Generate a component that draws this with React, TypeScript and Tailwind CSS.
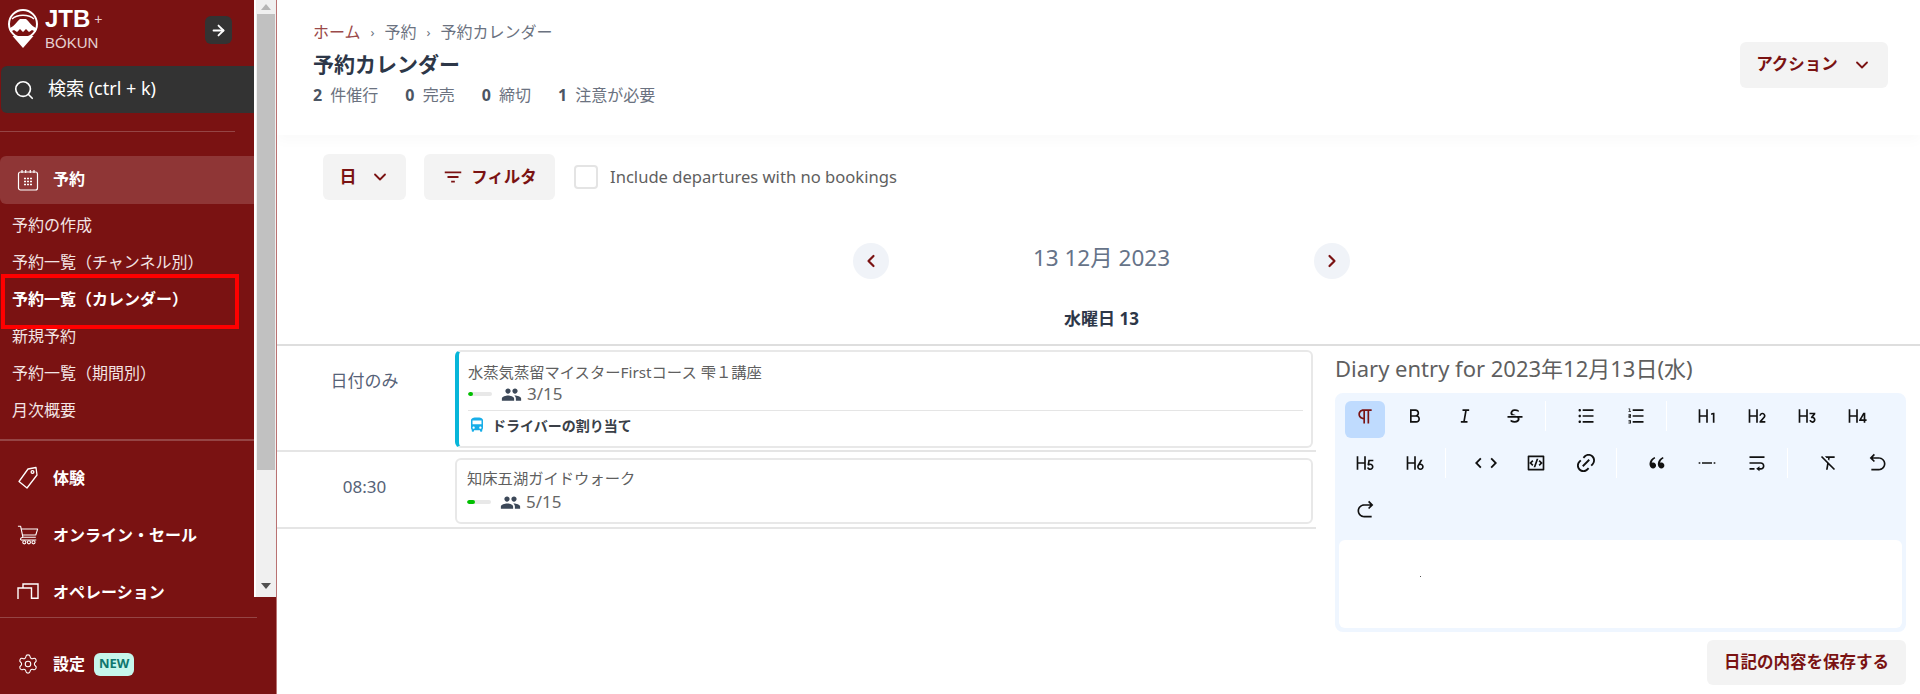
import React from "react";
import { ArrowRight, ChevronDown, ChevronLeft, ChevronRight, Search, Settings } from "lucide-react";
import { MdPeople, MdDirectionsBus, MdFilterList } from "react-icons/md";
import {
  RiParagraph, RiBold, RiItalic, RiStrikethrough, RiListUnordered, RiListOrdered, RiH1, RiH2, RiH3, RiH4, RiH5, RiH6,
  RiCodeSLine, RiCodeBoxLine, RiLink, RiDoubleQuotesL, RiSeparator, RiTextWrap, RiFormatClear, RiArrowGoBackLine, RiArrowGoForwardLine,
} from "react-icons/ri";

function Logo() {
  return (
    <svg width="32" height="40" viewBox="0 0 32 40" className="shrink-0">
      <path d="M16 39 L4 25 A15 15 0 1 1 28 25 Z" fill="#7a1212" />
      <path d="M16 39 L5.5 27 H26.5 Z" fill="#fff" />
      <circle cx="16" cy="15" r="14" fill="none" stroke="#fff" strokeWidth="2" />
      <path d="M3 19 C8 17 10 12 13 10 H19 C22 12 24 17 29 19 L29 23 L25 21 L22 23 L19 20 L16 23 L13 20 L10 23 L7 21 L3 23 Z" fill="#fff" />
      <path d="M5 10 C10 5 22 5 27 10" fill="none" stroke="#fff" strokeWidth="1.5" />
    </svg>
  );
}

function CalendarIcon() {
  return (
    <svg width="22" height="22" viewBox="0 0 22 22" fill="none" stroke="#fff" strokeWidth="1.2">
      <rect x="1.5" y="3" width="19" height="18" rx="2" />
      <path d="M5 1v3M8.7 1v3M13.3 1v3M17 1v3" />
      <path d="M7 9.5h8M7 12.5h8M7 15.5h8" strokeDasharray="2 1" strokeWidth="1.5" />
    </svg>
  );
}

function TagIcon() {
  return (
    <svg width="22" height="24" viewBox="0 0 22 24" fill="none" stroke="#fff" strokeWidth="1.3" strokeLinejoin="round">
      <path d="M11 3 L19 1.5 L20 9 L10 22 L2 15.5 Z" />
      <circle cx="15.5" cy="6" r="1.4" />
    </svg>
  );
}

function CartIcon() {
  return (
    <svg width="24" height="22" viewBox="0 0 24 22" fill="none" stroke="#fff" strokeWidth="1.2" strokeLinejoin="round">
      <path d="M1 1.5h3l2.5 12h14" />
      <path d="M4.5 4.5H22.5L20.5 11H6" />
      <path d="M6.5 13.5 C3 14 3 17 6 16.5 H21" />
      <circle cx="8" cy="19" r="1.7" />
      <circle cx="13" cy="19" r="1.7" />
      <circle cx="18" cy="19" r="1.7" />
    </svg>
  );
}

function OpsIcon() {
  return (
    <svg width="22" height="16" viewBox="0 0 22 16" fill="none" stroke="#fff" strokeWidth="1.4">
      <path d="M1 16V5H14.5V16" />
      <path d="M6 5V1H21V15.3H14.5" />
    </svg>
  );
}

function Track({ pct, color = "#00c000" }: { pct: number; color?: string }) {
  return (
    <div className="w-[24px] h-[4px] rounded-full bg-[#e8e8e8] overflow-hidden">
      <div className="h-full rounded-full" style={{ width: `${pct}%`, background: color }} />
    </div>
  );
}

function Scrollbar() {
  return (
    <div className="w-[22px] h-full shrink-0 bg-[#f0f0f0] border-l-[2px] border-white flex flex-col items-center">
      <div className="h-[14px] w-full flex items-center justify-center">
        <svg width="10" height="6" viewBox="0 0 10 6"><path d="M5 0L10 6H0Z" fill="#b5b5b5" /></svg>
      </div>
      <div className="h-[456px] w-[18px] bg-[#c1c1c1]" />
      <div className="flex-1" />
      <div className="h-[22px] w-full flex items-center justify-center">
        <svg width="10" height="6" viewBox="0 0 10 6"><path d="M5 6L10 0H0Z" fill="#505050" /></svg>
      </div>
    </div>
  );
}

const subItems = [
  { label: "予約の作成" },
  { label: "予約一覧（チャンネル別）" },
  { label: "予約一覧（カレンダー）", bold: true },
  { label: "新規予約" },
  { label: "予約一覧（期間別）" },
  { label: "月次概要" },
];

function Sidebar() {
  return (
    <aside className="relative w-[277px] h-[694px] shrink-0 bg-[#7a1212] border-r border-[#b97272] flex flex-col overflow-hidden">
      <div className="h-[597px] flex shrink-0">
        <div className="w-[254px] shrink-0">
          <div className="h-[66px] flex items-start pl-[7px] pt-[9px]">
            <Logo />
            <div className="ml-[6px] flex flex-col text-white font-['Liberation_Sans',sans-serif]">
              <div className="flex items-start h-[20px]">
                <span className="text-[24px] leading-[20px] font-bold">JTB</span>
                <span className="text-[14px] leading-[20px] ml-[4px] text-[#e6cccc]">+</span>
              </div>
              <span className="text-[15px] leading-[18px] mt-[5px] text-[#e6cfcf]">BÓKUN</span>
            </div>
            <div className="absolute left-[205px] top-[16px] w-[27px] h-[28px] rounded-md bg-[#333333] flex items-center justify-center">
              <ArrowRight size={17} color="#fff" strokeWidth={2.6} />
            </div>
          </div>
          <div className="ml-[1px] h-[47px] rounded-l-md bg-[#333333] flex items-center pl-[12px] text-white">
            <Search size={22} strokeWidth={1.8} />
            <span className="ml-[13px] text-[18px] leading-[22px] mb-[3px]">検索 (ctrl + k)</span>
          </div>
          <div className="mt-[18px] w-[235px] h-px bg-[#954545]" />
          <div className="mt-[24px] h-[48px] bg-[#8f3636] rounded-l-md flex items-center pl-[17px] text-white">
            <CalendarIcon />
            <span className="ml-[14px] text-[16px] leading-[22px] font-bold mb-[3px]">予約</span>
          </div>
          <div className="mt-[2px]">
            {subItems.map((s) => (
              <div key={s.label} className={`h-[37px] flex items-center pl-[12px] text-[16px] leading-[22px] ${s.bold ? "font-bold text-white" : "text-[#f3e4e4]"}`}>
                {s.label}
              </div>
            ))}
          </div>
          <div className="mt-[11px] h-[2px] bg-[#954545]" />
          <div className="mt-[8px]">
            {[
              { label: "体験", icon: <TagIcon /> },
              { label: "オンライン・セール", icon: <CartIcon /> },
            ].map((m) => (
              <div key={m.label} className="h-[57px] flex items-center text-white pl-[17px]">
                <span className="w-[22px] flex justify-center">{m.icon}</span>
                <span className="ml-[14px] text-[16px] leading-[22px] font-bold">{m.label}</span>
              </div>
            ))}
            <div className="h-[36px] pt-[20px] flex items-start text-white pl-[17px]">
              <span className="w-[22px] flex justify-center"><OpsIcon /></span>
              <span className="ml-[14px] text-[16px] leading-[16px] mt-[1px] font-bold">オペレーション</span>
            </div>
          </div>
        </div>
        <Scrollbar />
      </div>
      <div className="mt-[20px] w-[257px] h-px bg-[#954545]" />
      <div className="mt-[23px] h-[46px] flex items-center pl-[17px] text-white">
        <Settings size={22} strokeWidth={1.2} />
        <span className="ml-[14px] text-[16px] leading-[22px] font-bold">設定</span>
        <span className="ml-[9px] h-[23px] px-[5px] rounded-md bg-[#c6f6ec] text-[#0f766e] text-[13px] font-bold flex items-center">NEW</span>
      </div>
      <div className="absolute left-[1px] top-[274px] w-[238px] h-[55px] border-[4px] border-[#ff0000]" />
    </aside>
  );
}

function Stat({ n, label }: { n: string; label: string }) {
  return (
    <span>
      <b className="font-bold text-[#4b5563] mr-[4px]">{n}</b> {label}
    </span>
  );
}

function Header() {
  return (
    <header className="h-[135px] shrink-0 pl-[36px] pr-[32px] flex items-start justify-between shadow-[0_6px_12px_rgba(0,0,0,0.025)]">
      <div className="pt-[21px]">
        <div className="flex items-center text-[16px] leading-[22px] text-[#6b7280]">
          <span className="text-[#9b4a4a]">ホーム</span>
          <span className="mx-[10px] text-[13px]">›</span>
          <span>予約</span>
          <span className="mx-[10px] text-[13px]">›</span>
          <span>予約カレンダー</span>
        </div>
        <h1 className="mt-[7px] text-[21px] leading-[28px] font-bold text-[#2d3748]">予約カレンダー</h1>
        <div className="mt-[6px] flex gap-[27px] text-[16px] leading-[22px] text-[#6b7280]">
          <Stat n="2" label="件催行" />
          <Stat n="0" label="完売" />
          <Stat n="0" label="締切" />
          <Stat n="1" label="注意が必要" />
        </div>
      </div>
      <button className="mt-[42px] w-[148px] h-[46px] rounded-md bg-[#f3f3f3] text-[#7a1212] text-[16.5px] font-bold flex items-center justify-center gap-[14px]">
        <span className="mb-[2px]">アクション</span>
        <ChevronDown size={20} strokeWidth={2.2} />
      </button>
    </header>
  );
}

function Filters() {
  return (
    <div className="mt-[19px] pl-[46px] flex items-center h-[46px] shrink-0">
      <button className="w-[83px] h-[46px] rounded-md bg-[#f3f3f3] text-[#7a1212] text-[17px] font-bold flex items-center justify-center gap-[13px]">
        <span>日</span>
        <ChevronDown size={20} strokeWidth={2.2} />
      </button>
      <button className="ml-[18px] w-[131px] h-[46px] rounded-md bg-[#f3f3f3] text-[#7a1212] text-[16.5px] font-bold flex items-center justify-center gap-[7px]">
        <MdFilterList size={22} />
        <span>フィルタ</span>
      </button>
      <div className="ml-[19px] w-[24px] h-[24px] rounded-[4px] border-2 border-[#e4e4e4]" />
      <span className="ml-[12px] text-[16.6px] leading-[22px] mb-[1px] text-[#5f5f5f]">Include departures with no bookings</span>
    </div>
  );
}

function DateNav() {
  return (
    <div className="mt-[43px] flex items-center justify-center pl-[6px] shrink-0">
      <div className="w-[36px] h-[36px] rounded-full bg-[#f0f3f8] flex items-center justify-center text-[#7a1212]">
        <ChevronLeft size={20} strokeWidth={2.6} />
      </div>
      <div className="w-[425px] text-center text-[22.5px] leading-[30px] mb-[6px] text-[#667388]">13 12月 2023</div>
      <div className="w-[36px] h-[36px] rounded-full bg-[#f0f3f8] flex items-center justify-center text-[#7a1212]">
        <ChevronRight size={20} strokeWidth={2.6} />
      </div>
    </div>
  );
}

function Bookings() {
  return (
    <div className="w-[1039px] shrink-0">
      <div className="h-[106px] flex pt-[4px] border-b-2 border-[#e5e5e5]">
        <div className="w-[175px] mr-[3px] shrink-0 pt-[20px] text-center text-[17px] leading-[22px] text-[#566277]">日付のみ</div>
        <div className="w-[858px] h-[98px] rounded-md border-2 border-[#e8e8e8] border-l-[4px] border-l-[#07b6d9] pl-[9px] pr-[8px] pt-[10px]">
          <div className="text-[15.3px] leading-[20px] text-[#5f5f5f]">水蒸気蒸留マイスターFirstコース 雫１講座</div>
          <div className="flex items-center h-[20px] mt-[2px]">
            <Track pct={22} />
            <MdPeople size={21} className="ml-[9px] text-[#3c4858]" />
            <span className="ml-[5px] text-[17px] leading-[20px] text-[#666]">3/15</span>
          </div>
          <div className="mt-[6px] h-px bg-[#e5e5e5]" />
          <div className="flex items-center h-[26px] mt-[1px]">
            <MdDirectionsBus size={18} className="text-[#18aee8]" />
            <span className="ml-[6px] text-[14px] font-bold text-[#3a3f47]">ドライバーの割り当て</span>
          </div>
        </div>
      </div>
      <div className="h-[77px] flex pt-[6px] border-b-2 border-[#e5e5e5]">
        <div className="w-[175px] mr-[3px] shrink-0 pt-[18px] text-center text-[17px] leading-[22px] text-[#566277]">08:30</div>
        <div className="w-[858px] h-[66px] rounded-md border-2 border-[#e8e8e8] pl-[10px] pr-[8px] pt-[8px]">
          <div className="text-[15.3px] leading-[20px] text-[#5f5f5f]">知床五湖ガイドウォーク</div>
          <div className="flex items-center h-[20px] mt-[4px]">
            <Track pct={33} />
            <MdPeople size={21} className="ml-[9px] text-[#3c4858]" />
            <span className="ml-[5px] text-[17px] leading-[20px] text-[#666]">5/15</span>
          </div>
        </div>
      </div>
    </div>
  );
}

function TB({ icon, active }: { icon: React.ReactNode; active?: boolean }) {
  return (
    <div className={`w-[40px] h-[37px] pb-[7px] rounded-md flex items-center justify-center ${active ? "bg-[#bfdbfe] text-[#7a1212]" : "text-[#111]"}`}>
      {icon}
    </div>
  );
}

function Sep() {
  return <div className="w-px h-[30px] mr-[10px] bg-white" />;
}

function Diary() {
  const s = 20;
  return (
    <div className="ml-[19px] w-[571px] shrink-0">
      <div className="mt-[8px] text-[22px] leading-[28px] text-[#5f5f5f]">Diary entry for 2023年12月13日(水)</div>
      <div className="mt-[11px] h-[239px] rounded-lg border-[4px] border-[#eff6ff] bg-[#eff6ff] flex flex-col overflow-hidden">
        <div className="h-[143px] shrink-0 pt-[4px] pl-[6px] flex flex-wrap content-start gap-x-[10px] gap-y-[10px]">
          <TB active icon={<RiParagraph size={s} />} />
          <TB icon={<RiBold size={s} />} />
          <TB icon={<RiItalic size={s} />} />
          <TB icon={<RiStrikethrough size={s} />} />
          <Sep />
          <TB icon={<RiListUnordered size={s} />} />
          <TB icon={<RiListOrdered size={s} />} />
          <Sep />
          <TB icon={<RiH1 size={s} />} />
          <TB icon={<RiH2 size={s} />} />
          <TB icon={<RiH3 size={s} />} />
          <TB icon={<RiH4 size={s} />} />
          <TB icon={<RiH5 size={s} />} />
          <TB icon={<RiH6 size={s} />} />
          <Sep />
          <TB icon={<RiCodeSLine size={22} />} />
          <TB icon={<RiCodeBoxLine size={s} />} />
          <TB icon={<RiLink size={22} />} />
          <Sep />
          <TB icon={<RiDoubleQuotesL size={s} />} />
          <TB icon={<RiSeparator size={s} />} />
          <TB icon={<RiTextWrap size={s} />} />
          <Sep />
          <TB icon={<RiFormatClear size={s} />} />
          <TB icon={<RiArrowGoBackLine size={s} />} />
          <TB icon={<RiArrowGoForwardLine size={s} />} />
        </div>
        <div className="flex-1 bg-white rounded-md pl-[81px] pt-[36px]">
          <div className="w-px h-px bg-[#555]" />
        </div>
      </div>
      <div className="mt-[8px] flex justify-end">
        <button className="w-[199px] h-[45px] rounded-md bg-[#f3f3f3] text-[#7a1212] text-[16.5px] font-bold">日記の内容を保存する</button>
      </div>
    </div>
  );
}

export default function App() {
  return (
    <div className="w-[1920px] h-[694px] flex bg-white overflow-hidden font-['Noto_Sans','Noto_Sans_CJK_JP',sans-serif]">
      <Sidebar />
      <main className="flex-1 flex flex-col min-w-0">
        <Header />
        <Filters />
        <DateNav />
        <div className="mt-[30px] h-[20px] pl-[6px] text-center text-[17px] leading-[20px] font-bold text-[#2d3748]">水曜日 13</div>
        <div className="mt-[15px] h-[2px] bg-[#dedede] shrink-0" />
        <div className="flex">
          <Bookings />
          <Diary />
        </div>
      </main>
    </div>
  );
}
